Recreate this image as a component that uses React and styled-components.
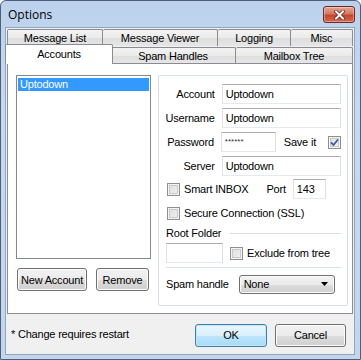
import React from 'react'
import styled, { createGlobalStyle } from 'styled-components'

const GlobalStyle = createGlobalStyle`
  html, body {
    margin: 0;
    padding: 0;
    background: #fff;
  }
  body {
    font-family: "Liberation Sans", Arial, sans-serif;
    font-size: 11px;
    letter-spacing: -0.2px;
    color: #000;
    white-space: nowrap;
  }
`

const Window = styled.div`
  width: 361px;
  height: 360px;
  box-sizing: border-box;
  display: flex;
  flex-direction: column;
  padding: 0 5px 4px 4px;
  border: 1px solid #4f5f78;
  border-radius: 6px 6px 0 0;
  background: linear-gradient(180deg, #bcd2ec 0%, #c6d9f0 30%, #c2d6ee 100%);
`

const TitleBar = styled.div`
  height: 26px;
  flex: 0 0 26px;
  display: flex;
  align-items: center;
  padding-left: 3px;
`

const Title = styled.span`
  font-family: "Open Sans", "Noto Sans", sans-serif;
  font-size: 12px;
  letter-spacing: 0;
  color: #000;
  margin-top: 1px;
`

const CloseButton = styled.div`
  margin-left: auto;
  width: 30px;
  height: 15px;
  margin-top: 1px;
  border: 1px solid #6d2a22;
  border-radius: 3px;
  background: linear-gradient(180deg, #e7a593 0%, #d47964 45%, #c4452e 55%, #d36a4f 100%);
  display: flex;
  align-items: center;
  justify-content: center;
  box-shadow: inset 0 0 0 1px rgba(255, 255, 255, 0.35);
`

const Client = styled.div`
  flex: 1;
  display: flex;
  flex-direction: column;
  background: #f0f0f0;
  border: 1px solid #8fa6c1;
  padding: 1px 1px 0 1px;
`

const TabStrip = styled.div`
  display: flex;
  flex-direction: column;
`

const TabRow = styled.div`
  display: flex;
  height: 17px;
`

const Tab = styled.div`
  box-sizing: border-box;
  width: ${p => p.w}px;
  height: ${p => (p.front ? 16 : 17)}px;
  margin-top: ${p => (p.front ? 1 : 0)}px;
  border: 1px solid #898c95;
  border-bottom: none;
  border-left-width: ${p => (p.first ? 1 : 0)}px;
  border-radius: 2px 2px 0 0;
  background: linear-gradient(180deg, #f3f3f3 0%, #ebebeb 50%, #dedede 51%, #e6e6e6 100%);
  display: flex;
  align-items: center;
  justify-content: center;
  line-height: 1;
  padding-top: 1px;
`

const ActiveTab = styled.div`
  box-sizing: border-box;
  position: relative;
  z-index: 2;
  width: ${p => p.w + 4}px;
  height: 20px;
  margin: -2px -2px -1px -2px;
  border: 1px solid #898c95;
  border-bottom: none;
  border-radius: 2px 2px 0 0;
  background: #fff;
  display: flex;
  align-items: flex-start;
  justify-content: center;
  padding-top: 3px;
`

const Panel = styled.div`
  box-sizing: border-box;
  height: 251px;
  background: #fff;
  border: 1px solid #898c95;
  display: flex;
  gap: 7px;
  padding: 11px 0 0 8px;
`

const LeftColumn = styled.div`
  width: 135px;
  display: flex;
  flex-direction: column;
`

const ListBox = styled.div`
  box-sizing: border-box;
  height: 184px;
  border: 1px solid #828790;
  padding: 2px 1px;
`

const ListItem = styled.div`
  height: 13px;
  line-height: 13px;
  padding-left: 2px;
  background: ${p => (p.selected ? '#3399ff' : 'transparent')};
  color: ${p => (p.selected ? '#fff' : '#000')};
`

const ButtonRow = styled.div`
  display: flex;
  gap: 9px;
  margin-top: 9px;
  padding-left: 1px;
`

const Button = styled.button`
  box-sizing: border-box;
  width: ${p => p.w}px;
  height: 23px;
  padding: 0;
  font-family: "Liberation Sans", Arial, sans-serif;
  font-size: 11px;
  letter-spacing: -0.2px;
  color: #000;
  border: 1px solid ${p => (p.primary ? '#3c7fb1' : '#707070')};
  border-radius: 3px;
  background: ${p =>
    p.primary
      ? 'linear-gradient(180deg, #eaf6fd 0%, #d9f0fc 50%, #bee6fd 51%, #a7d9f5 100%)'
      : 'linear-gradient(180deg, #f2f2f2 0%, #ebebeb 50%, #dddddd 51%, #cfcfcf 100%)'};
  box-shadow: inset 0 0 0 1px ${p => (p.primary ? '#c4e5f6' : '#fcfcfc')};
`

const GroupBox = styled.div`
  box-sizing: border-box;
  width: 190px;
  height: 231px;
  border: 1px solid #d5dfe5;
  border-radius: 2px;
  display: flex;
  flex-direction: column;
  padding: 8px 6px 0 0;
`

const FieldRow = styled.div`
  display: flex;
  align-items: center;
  height: 20px;
  margin-bottom: ${p => p.mb ?? 4}px;
`

const FieldLabel = styled.span`
  width: 56px;
  text-align: right;
  margin-right: 7px;
`

const TextInput = styled.div`
  box-sizing: border-box;
  width: ${p => p.w}px;
  height: 20px;
  margin-left: ${p => p.ml ?? 0}px;
  border: 1px solid #abadb3;
  border-left-color: #e2e3ea;
  border-right-color: #dbdfe6;
  border-bottom-color: #e3e9ef;
  display: flex;
  align-items: center;
  padding-left: 3px;
  background: #fff;
`

const Mask = styled.span`
  font-size: 8px;
  letter-spacing: 0;
  color: #333;
  margin-top: -2px;
`

const SideText = styled.span`
  margin-left: ${p => p.ml}px;
`

const CheckRow = styled.div`
  display: flex;
  align-items: center;
  height: 20px;
  padding-left: ${p => p.pl ?? 8}px;
  margin-top: ${p => p.mt ?? 0}px;
  margin-bottom: ${p => p.mb ?? 0}px;
`

const Box = styled.span`
  box-sizing: border-box;
  width: 13px;
  height: 13px;
  flex: 0 0 13px;
  border: 1px solid #8e8f8f;
  background: linear-gradient(135deg, #dcdcdc 0%, #f4f4f4 100%);
  box-shadow: inset 0 0 0 1px #f4f4f4, inset 0 0 0 2px #c9c9c9;
  display: flex;
  align-items: center;
  justify-content: center;
  margin-left: ${p => p.ml ?? 0}px;
`

const CheckText = styled.span`
  margin-left: 4px;
`

const SectionHead = styled.div`
  display: flex;
  align-items: center;
  height: 14px;
  padding-left: 7px;
  margin-top: 3px;
`

const Rule = styled.div`
  flex: 1;
  height: 0;
  border-top: 1px solid #d5dfe5;
  margin-left: ${p => p.ml ?? 0}px;
`

const Divider = styled.div`
  height: 0;
  border-top: 1px solid #d5dfe5;
  margin: 4px 0 0 7px;
`

const Select = styled.div`
  box-sizing: border-box;
  width: 96px;
  height: 19px;
  margin-left: 10px;
  border: 1px solid #707070;
  border-radius: 3px;
  background: linear-gradient(180deg, #f2f2f2 0%, #ebebeb 50%, #dddddd 51%, #cfcfcf 100%);
  box-shadow: inset 0 0 0 1px #fcfcfc;
  display: flex;
  align-items: center;
  padding: 0 6px 0 4px;
  justify-content: space-between;
`

const Footer = styled.div`
  flex: 1;
  display: flex;
  align-items: center;
  padding: 0 7px 0 4px;
`

const Note = styled.span`
  margin-right: auto;
`

const FooterButtons = styled.div`
  display: flex;
  gap: 8px;
  margin-top: 2px;
`

const CheckMark = () => (
  <svg width="9" height="9" viewBox="0 0 9 9">
    <path d="M1 4.5 L3.5 7 L8 1.5" fill="none" stroke="#3a5ea6" strokeWidth="1.8" />
  </svg>
)

const CloseGlyph = () => (
  <svg width="11" height="10" viewBox="0 0 11 10">
    <path d="M2 1.5 L9 8.5 M9 1.5 L2 8.5" stroke="#5a1b14" strokeWidth="3.4" strokeLinecap="square" />
    <path d="M2 1.5 L9 8.5 M9 1.5 L2 8.5" stroke="#fff" strokeWidth="2" strokeLinecap="square" />
  </svg>
)

const Arrow = () => (
  <svg width="7" height="4" viewBox="0 0 7 4">
    <path d="M0 0 H7 L3.5 4 Z" fill="#000" />
  </svg>
)

export default function App() {
  return (
    <>
      <GlobalStyle />
      <Window>
        <TitleBar>
          <Title>Options</Title>
          <CloseButton>
            <CloseGlyph />
          </CloseButton>
        </TitleBar>
        <Client>
          <TabStrip>
            <TabRow>
              <Tab w={96} first>Message List</Tab>
              <Tab w={115}>Message Viewer</Tab>
              <Tab w={73}>Logging</Tab>
              <Tab w={62}>Misc</Tab>
            </TabRow>
            <TabRow>
              <ActiveTab w={104}>Accounts</ActiveTab>
              <Tab w={125} front>Spam Handles</Tab>
              <Tab w={117} front>Mailbox Tree</Tab>
            </TabRow>
          </TabStrip>
          <Panel>
            <LeftColumn>
              <ListBox>
                <ListItem selected>Uptodown</ListItem>
              </ListBox>
              <ButtonRow>
                <Button w={70}>New Account</Button>
                <Button w={53}>Remove</Button>
              </ButtonRow>
            </LeftColumn>
            <GroupBox>
              <FieldRow>
                <FieldLabel>Account</FieldLabel>
                <TextInput w={120}>Uptodown</TextInput>
              </FieldRow>
              <FieldRow>
                <FieldLabel>Username</FieldLabel>
                <TextInput w={120}>Uptodown</TextInput>
              </FieldRow>
              <FieldRow>
                <FieldLabel>Password</FieldLabel>
                <TextInput w={56}>
                  <Mask>******</Mask>
                </TextInput>
                <SideText ml={8}>Save it</SideText>
                <Box ml={12}>
                  <CheckMark />
                </Box>
              </FieldRow>
              <FieldRow mb={3}>
                <FieldLabel>Server</FieldLabel>
                <TextInput w={120}>Uptodown</TextInput>
              </FieldRow>
              <CheckRow mb={4}>
                <Box />
                <CheckText>Smart INBOX</CheckText>
                <SideText ml={18}>Port</SideText>
                <TextInput w={33} ml={7}>143</TextInput>
              </CheckRow>
              <CheckRow>
                <Box />
                <CheckText>Secure Connection (SSL)</CheckText>
              </CheckRow>
              <SectionHead>
                <span>Root Folder</span>
                <Rule ml={9} />
              </SectionHead>
              <CheckRow pl={7} mt={3}>
                <TextInput w={57} />
                <Box ml={7} />
                <CheckText>Exclude from tree</CheckText>
              </CheckRow>
              <Divider />
              <CheckRow pl={7} mt={6}>
                <span>Spam handle</span>
                <Select>
                  <span>None</span>
                  <Arrow />
                </Select>
              </CheckRow>
            </GroupBox>
          </Panel>
          <Footer>
            <Note>* Change requires restart</Note>
            <FooterButtons>
              <Button w={72} primary>OK</Button>
              <Button w={71}>Cancel</Button>
            </FooterButtons>
          </Footer>
        </Client>
      </Window>
    </>
  )
}
